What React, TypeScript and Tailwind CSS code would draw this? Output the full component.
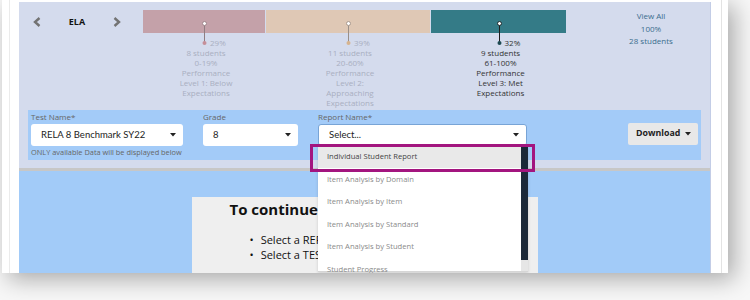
import { ReactNode } from "react";

type Segment = {
  pct: string;
  width: string;
  bar: string;
  ring: string;
  dot: string;
  line: string;
  text: string;
  lines: string[];
};

const segments: Segment[] = [
  {
    pct: "29%",
    width: "w-[122px]",
    bar: "bg-[#c4a1a9]",
    ring: "border-[#a0868c]",
    dot: "bg-[#c58f99]",
    line: "bg-[#8f7d82]",
    text: "text-[#a9afc1]",
    lines: ["8 students", "0-19%", "Performance", "Level 1: Below", "Expectations"],
  },
  {
    pct: "39%",
    width: "w-[164px]",
    bar: "bg-[#dfc8b5]",
    ring: "border-[#a99a8e]",
    dot: "bg-[#d6b48f]",
    line: "bg-[#9a8f88]",
    text: "text-[#a9afc1]",
    lines: ["11 students", "20-60%", "Performance", "Level 2:", "Approaching", "Expectations"],
  },
  {
    pct: "32%",
    width: "w-[135px]",
    bar: "bg-[#347b87]",
    ring: "border-[#1d2a2e]",
    dot: "bg-[#1d4a52]",
    line: "bg-[#1d1d1d]",
    text: "text-[#333]",
    lines: ["9 students", "61-100%", "Performance", "Level 3: Met", "Expectations"],
  },
];

const reports = [
  "Item Analysis by Domain",
  "Item Analysis by Item",
  "Item Analysis by Standard",
  "Item Analysis by Student",
  "Student Progress",
];

function Caret() {
  return (
    <svg width="6" height="4" viewBox="0 0 6 4" className="shrink-0">
      <polygon points="0,0 6,0 3,3.5" fill="#222" />
    </svg>
  );
}

function Chevron({ dir }: { dir: "left" | "right" }) {
  return (
    <svg width="9" height="10" viewBox="0 0 9 10" className="shrink-0">
      <polyline
        points={dir === "left" ? "6.5,1 2,5 6.5,9" : "2.5,1 7,5 2.5,9"}
        fill="none"
        stroke="#737373"
        strokeWidth="2.4"
      />
    </svg>
  );
}

function Field({ label, width, children }: { label: string; width: string; children: ReactNode }) {
  return (
    <div className={`flex flex-col ${width}`}>
      <div className="h-[14px] text-[8px] leading-[14px] text-[#666]">{label}</div>
      {children}
    </div>
  );
}

function SelectBox({ value, focused }: { value: string; focused?: boolean }) {
  return (
    <div
      className={`flex h-[22px] items-center justify-between rounded-[3px] bg-white pl-[10px] pr-[7px] font-['Lato',sans-serif] text-[9.5px] text-[#222] ${
        focused ? "border border-[#78a4d6]" : ""
      }`}
    >
      <span>{value}</span>
      <Caret />
    </div>
  );
}

export default function App() {
  return (
    <div className="h-[300px] w-[750px] overflow-hidden bg-[#f7f7f7] font-['Open_Sans',sans-serif]">
      <div className="ml-[2px] flex h-[273px] w-[726px] overflow-hidden bg-white shadow-[6px_6px_22px_rgba(0,0,0,0.32)]">
        {/* left frame */}
        <div className="flex w-[17px] shrink-0">
          <div className="w-[7px]" />
          <div className="w-px bg-[#ebebeb]" />
        </div>

        {/* main panel */}
        <div className="mt-[2px] flex w-[692px] shrink-0 flex-col border-r border-[#c3cde6]">
          {/* chart */}
          <div className="flex h-[108px] shrink-0 items-start bg-[#d4dbed] pt-[8px]">
            <div className="flex h-[23px] w-[124px] shrink-0 items-center pl-[14px]">
              <Chevron dir="left" />
              <div className="w-[70px] text-center text-[9px] font-bold text-[#111]">ELA</div>
              <Chevron dir="right" />
            </div>

            <div className="flex w-[423px] shrink-0 gap-[1px]">
              {segments.map((s) => (
                <div key={s.pct} className={`relative flex flex-col ${s.width}`}>
                  <div className={`h-[23px] ${s.bar}`} />
                  <div className={`mt-[5px] flex h-[10px] text-[8px] leading-[10px] ${s.text}`}>
                    <div className="w-1/2" />
                    <div className="pl-[6px]">{s.pct}</div>
                  </div>
                  <div className={`pl-[4px] text-center text-[8px] leading-[10px] ${s.text}`}>
                    {s.lines.map((l) => (
                      <div key={l}>{l}</div>
                    ))}
                  </div>
                  <div className={`absolute left-1/2 top-[14px] h-[19px] w-px ${s.line}`} />
                  <div
                    className={`absolute left-1/2 top-[11px] h-[5px] w-[5px] -translate-x-[2px] rounded-full border bg-white ${s.ring}`}
                  />
                  <div
                    className={`absolute left-1/2 top-[31px] h-[4px] w-[4px] -translate-x-[1.5px] rounded-full ${s.dot}`}
                  />
                </div>
              ))}
            </div>

            <div className="ml-[26px] w-[120px] text-center text-[8px] leading-[12.5px] text-[#3b6e8e]">
              <div>View All</div>
              <div>100%</div>
              <div>28 students</div>
            </div>
          </div>

          {/* filters */}
          <div className="shrink-0 bg-[#d4dbed] px-[9px] pb-[8px]">
            <div className="flex h-[50px] items-start gap-[20px] bg-[#a3cbf8] px-[3px]">
              <div className="flex flex-col">
                <Field label="Test Name*" width="w-[152px]">
                  <SelectBox value="RELA 8 Benchmark SY22" />
                </Field>
                <div className="mt-[1px] whitespace-nowrap text-[7.4px] leading-[10px] text-[#666]">
                  ONLY available Data will be displayed below
                </div>
              </div>
              <Field label="Grade" width="w-[95px]">
                <SelectBox value="8" />
              </Field>
              <Field label="Report Name*" width="w-[209px]">
                <div className="relative">
                  <SelectBox value="Select..." focused />
                  <div className="absolute left-0 top-full z-10 flex h-[126px] w-[210px] border-b border-[#d6d6d6] bg-white shadow-[0_1px_3px_rgba(0,0,0,0.15)]">
                    <div className="flex-1 text-[7.6px]">
                      <div className="flex h-[22px] items-center bg-[#e9e9e9] pl-[9px] text-[#444]">
                        Individual Student Report
                      </div>
                      {reports.map((r) => (
                        <div key={r} className="flex h-[22.5px] items-center pl-[9px] text-[#8a8a8a]">
                          {r}
                        </div>
                      ))}
                    </div>
                    <div className="flex w-[7px] flex-col bg-[#e6e6e6]">
                      <div className="h-[114px] bg-[#1b2838]" />
                    </div>
                  </div>
                  <div className="absolute left-[-8px] top-[20px] z-20 h-[28px] w-[225px] border-[3px] border-[#a3157f]" />
                </div>
              </Field>
              <button className="ml-auto mt-[13px] flex h-[22px] w-[70px] items-center gap-[5px] rounded-[2px] bg-[#e8e8e8] pl-[8px] text-[8.8px] font-bold text-[#222]">
                Download
                <Caret />
              </button>
            </div>
          </div>

          <div className="h-[3px] shrink-0 bg-[#c7c7c7]" />

          {/* message area */}
          <div className="min-h-0 flex-1 overflow-hidden bg-[#a2cbf8] pt-[26px]">
            <div className="mx-auto h-[80px] w-[346px] bg-[#efefef] pl-[38px] pt-[2px]">
              <div className="whitespace-nowrap text-[15px] font-bold leading-[20px] text-[#111]">
                To continue, please:
              </div>
              <ul className="ml-[20px] mt-[13px] text-[11px] leading-[15px] text-[#111]">
                <li className="flex gap-[7px] whitespace-nowrap">
                  <span>•</span>
                  <span>Select a REPORT NAME</span>
                </li>
                <li className="flex gap-[7px] whitespace-nowrap">
                  <span>•</span>
                  <span>Select a TEST NAME</span>
                </li>
              </ul>
            </div>
          </div>
        </div>

        {/* right frame */}
        <div className="flex w-[17px] shrink-0">
          <div className="w-[10px]" />
          <div className="w-px bg-[#e3e3e3]" />
        </div>
      </div>
    </div>
  );
}
